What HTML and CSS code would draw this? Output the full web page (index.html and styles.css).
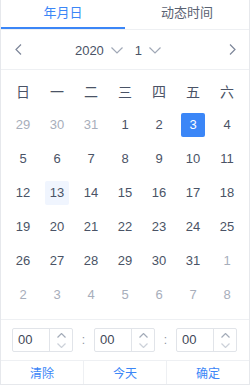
FILE: index.html
```html
<!DOCTYPE html>
<html lang="zh-CN">
<head>
  <meta charset="UTF-8">
  <meta name="viewport" content="width=device-width, initial-scale=1.0">
  <title>日期选择</title>
  <link rel="stylesheet" href="styles.css">
</head>
<body>

<div class="picker">
  <div class="tabs">
    <div class="tab active">年月日</div>
    <div class="tab">动态时间</div>
  </div>

  <div class="nav">
    <svg class="arrow" width="7" height="11" viewBox="0 0 7 11"><path d="M6 0.5 L1 5.5 L6 10.5"/></svg>
    <div class="select-group">
      <div class="select">2020 <svg class="caret" width="12" height="7" viewBox="0 0 12 7"><path d="M0.5 0.5 L6 6 L11.5 0.5"/></svg></div>
      <div class="select">1 <svg class="caret" width="12" height="7" viewBox="0 0 12 7"><path d="M0.5 0.5 L6 6 L11.5 0.5"/></svg></div>
    </div>
    <svg class="arrow" width="7" height="11" viewBox="0 0 7 11"><path d="M1 0.5 L6 5.5 L1 10.5"/></svg>
  </div>

  <div class="calendar">
    <div class="week">日</div><div class="week">一</div><div class="week">二</div><div class="week">三</div><div class="week">四</div><div class="week">五</div><div class="week">六</div>

    <div class="day muted"><span>29</span></div><div class="day muted"><span>30</span></div><div class="day muted"><span>31</span></div><div class="day"><span>1</span></div><div class="day"><span>2</span></div><div class="day selected"><span>3</span></div><div class="day"><span>4</span></div>
    <div class="day"><span>5</span></div><div class="day"><span>6</span></div><div class="day"><span>7</span></div><div class="day"><span>8</span></div><div class="day"><span>9</span></div><div class="day"><span>10</span></div><div class="day"><span>11</span></div>
    <div class="day"><span>12</span></div><div class="day today"><span>13</span></div><div class="day"><span>14</span></div><div class="day"><span>15</span></div><div class="day"><span>16</span></div><div class="day"><span>17</span></div><div class="day"><span>18</span></div>
    <div class="day"><span>19</span></div><div class="day"><span>20</span></div><div class="day"><span>21</span></div><div class="day"><span>22</span></div><div class="day"><span>23</span></div><div class="day"><span>24</span></div><div class="day"><span>25</span></div>
    <div class="day"><span>26</span></div><div class="day"><span>27</span></div><div class="day"><span>28</span></div><div class="day"><span>29</span></div><div class="day"><span>30</span></div><div class="day"><span>31</span></div><div class="day muted"><span>1</span></div>
    <div class="day muted"><span>2</span></div><div class="day muted"><span>3</span></div><div class="day muted"><span>4</span></div><div class="day muted"><span>5</span></div><div class="day muted"><span>6</span></div><div class="day muted"><span>7</span></div><div class="day muted"><span>8</span></div>
  </div>

  <div class="time">
    <div class="spin-input">
      <span class="value">00</span>
      <div class="spinner">
        <svg class="up" width="9" height="5" viewBox="0 0 9 5"><path d="M0.5 4.5 L4.5 0.5 L8.5 4.5"/></svg>
        <svg class="down" width="9" height="5" viewBox="0 0 9 5"><path d="M0.5 0.5 L4.5 4.5 L8.5 0.5"/></svg>
      </div>
    </div>
    <span class="colon">:</span>
    <div class="spin-input">
      <span class="value">00</span>
      <div class="spinner">
        <svg class="up" width="9" height="5" viewBox="0 0 9 5"><path d="M0.5 4.5 L4.5 0.5 L8.5 4.5"/></svg>
        <svg class="down" width="9" height="5" viewBox="0 0 9 5"><path d="M0.5 0.5 L4.5 4.5 L8.5 0.5"/></svg>
      </div>
    </div>
    <span class="colon">:</span>
    <div class="spin-input">
      <span class="value">00</span>
      <div class="spinner">
        <svg class="up" width="9" height="5" viewBox="0 0 9 5"><path d="M0.5 4.5 L4.5 0.5 L8.5 4.5"/></svg>
        <svg class="down" width="9" height="5" viewBox="0 0 9 5"><path d="M0.5 0.5 L4.5 4.5 L8.5 0.5"/></svg>
      </div>
    </div>
  </div>

  <div class="footer">
    <button class="action">清除</button>
    <button class="action">今天</button>
    <button class="action">确定</button>
  </div>
</div>

</body>
</html>
```

FILE: styles.css
```css
body {
  margin: 0;
  background-color: #fff;
  font-family: "Liberation Sans", "Noto Sans CJK SC", sans-serif;
  color: #4a5366;
}
.picker {
  width: 250px;
  height: 385px;
  box-sizing: border-box;
  border: 1px solid #e6e8ec;
  border-top: none;
  display: flex;
  flex-direction: column;
}
.tabs {
  display: flex;
  border-bottom: 1px solid #eef0f3;
}
.tab {
  flex: 1;
  height: 29px;
  box-sizing: border-box;
  padding-top: 4px;
  font-size: 13px;
  line-height: 17px;
  text-align: center;
  color: #5a6272;
  border-bottom: 2px solid transparent;
}
.tab.active {
  color: #3b86f7;
  border-bottom-color: #3b86f7;
}
.nav {
  height: 39px;
  display: flex;
  align-items: center;
  padding: 0 13px 0 14px;
  border-bottom: 1px solid #eef0f3;
}
.arrow path, .caret path, .spinner path {
  fill: none;
  stroke-width: 1.2;
}
.arrow path {
  stroke: #7d8699;
}
.select-group {
  flex: 1;
  display: flex;
  justify-content: center;
  gap: 12px;
  padding-right: 15px;
  padding-top: 1px;
}
.select {
  display: flex;
  align-items: center;
  gap: 7px;
  font-size: 13px;
  color: #4a5366;
}
.caret path {
  stroke: #a0a8b6;
}
.calendar {
  display: grid;
  grid-template-columns: repeat(7, 34px);
  grid-auto-rows: 34px;
  padding: 4px 5px 7px;
  border-bottom: 1px solid #eef0f3;
}
.week {
  display: flex;
  align-items: center;
  justify-content: center;
  font-size: 14px;
  color: #4a5366;
}
.day {
  display: flex;
  align-items: center;
  justify-content: center;
  font-size: 13px;
}
.day span {
  width: 24px;
  height: 24px;
  line-height: 24px;
  text-align: center;
  border-radius: 2px;
}
.day.muted {
  color: #a7aebb;
}
.day.selected span {
  background-color: #3b86f7;
  color: #fff;
}
.day.today span {
  background-color: #f0f5fe;
}
.time {
  display: flex;
  align-items: center;
  padding: 8px 0 8px 11px;
  border-bottom: 1px solid #eef0f3;
}
.spin-input {
  width: 61px;
  height: 24px;
  box-sizing: border-box;
  display: flex;
  border: 1px solid #e1e4e9;
  border-radius: 2px;
}
.value {
  flex: 1;
  padding-left: 5px;
  font-size: 13px;
  line-height: 22px;
  color: #3f4858;
}
.spinner {
  width: 22px;
  border-left: 1px solid #e1e4e9;
  display: flex;
  flex-direction: column;
  align-items: center;
  justify-content: center;
  gap: 5px;
}
.spinner .up path {
  stroke: #a3abb8;
}
.spinner .down path {
  stroke: #ccd1d9;
}
.colon {
  width: 21px;
  text-align: center;
  font-size: 12px;
  color: #8c94a3;
}
.footer {
  flex: 1;
  display: flex;
}
.action {
  flex: 1;
  margin: 0;
  padding: 0;
  border: none;
  border-left: 1px solid #eef0f3;
  background: none;
  font-family: inherit;
  font-size: 12px;
  color: #3b86f7;
  cursor: pointer;
}
.action:first-child {
  border-left: none;
}
```
